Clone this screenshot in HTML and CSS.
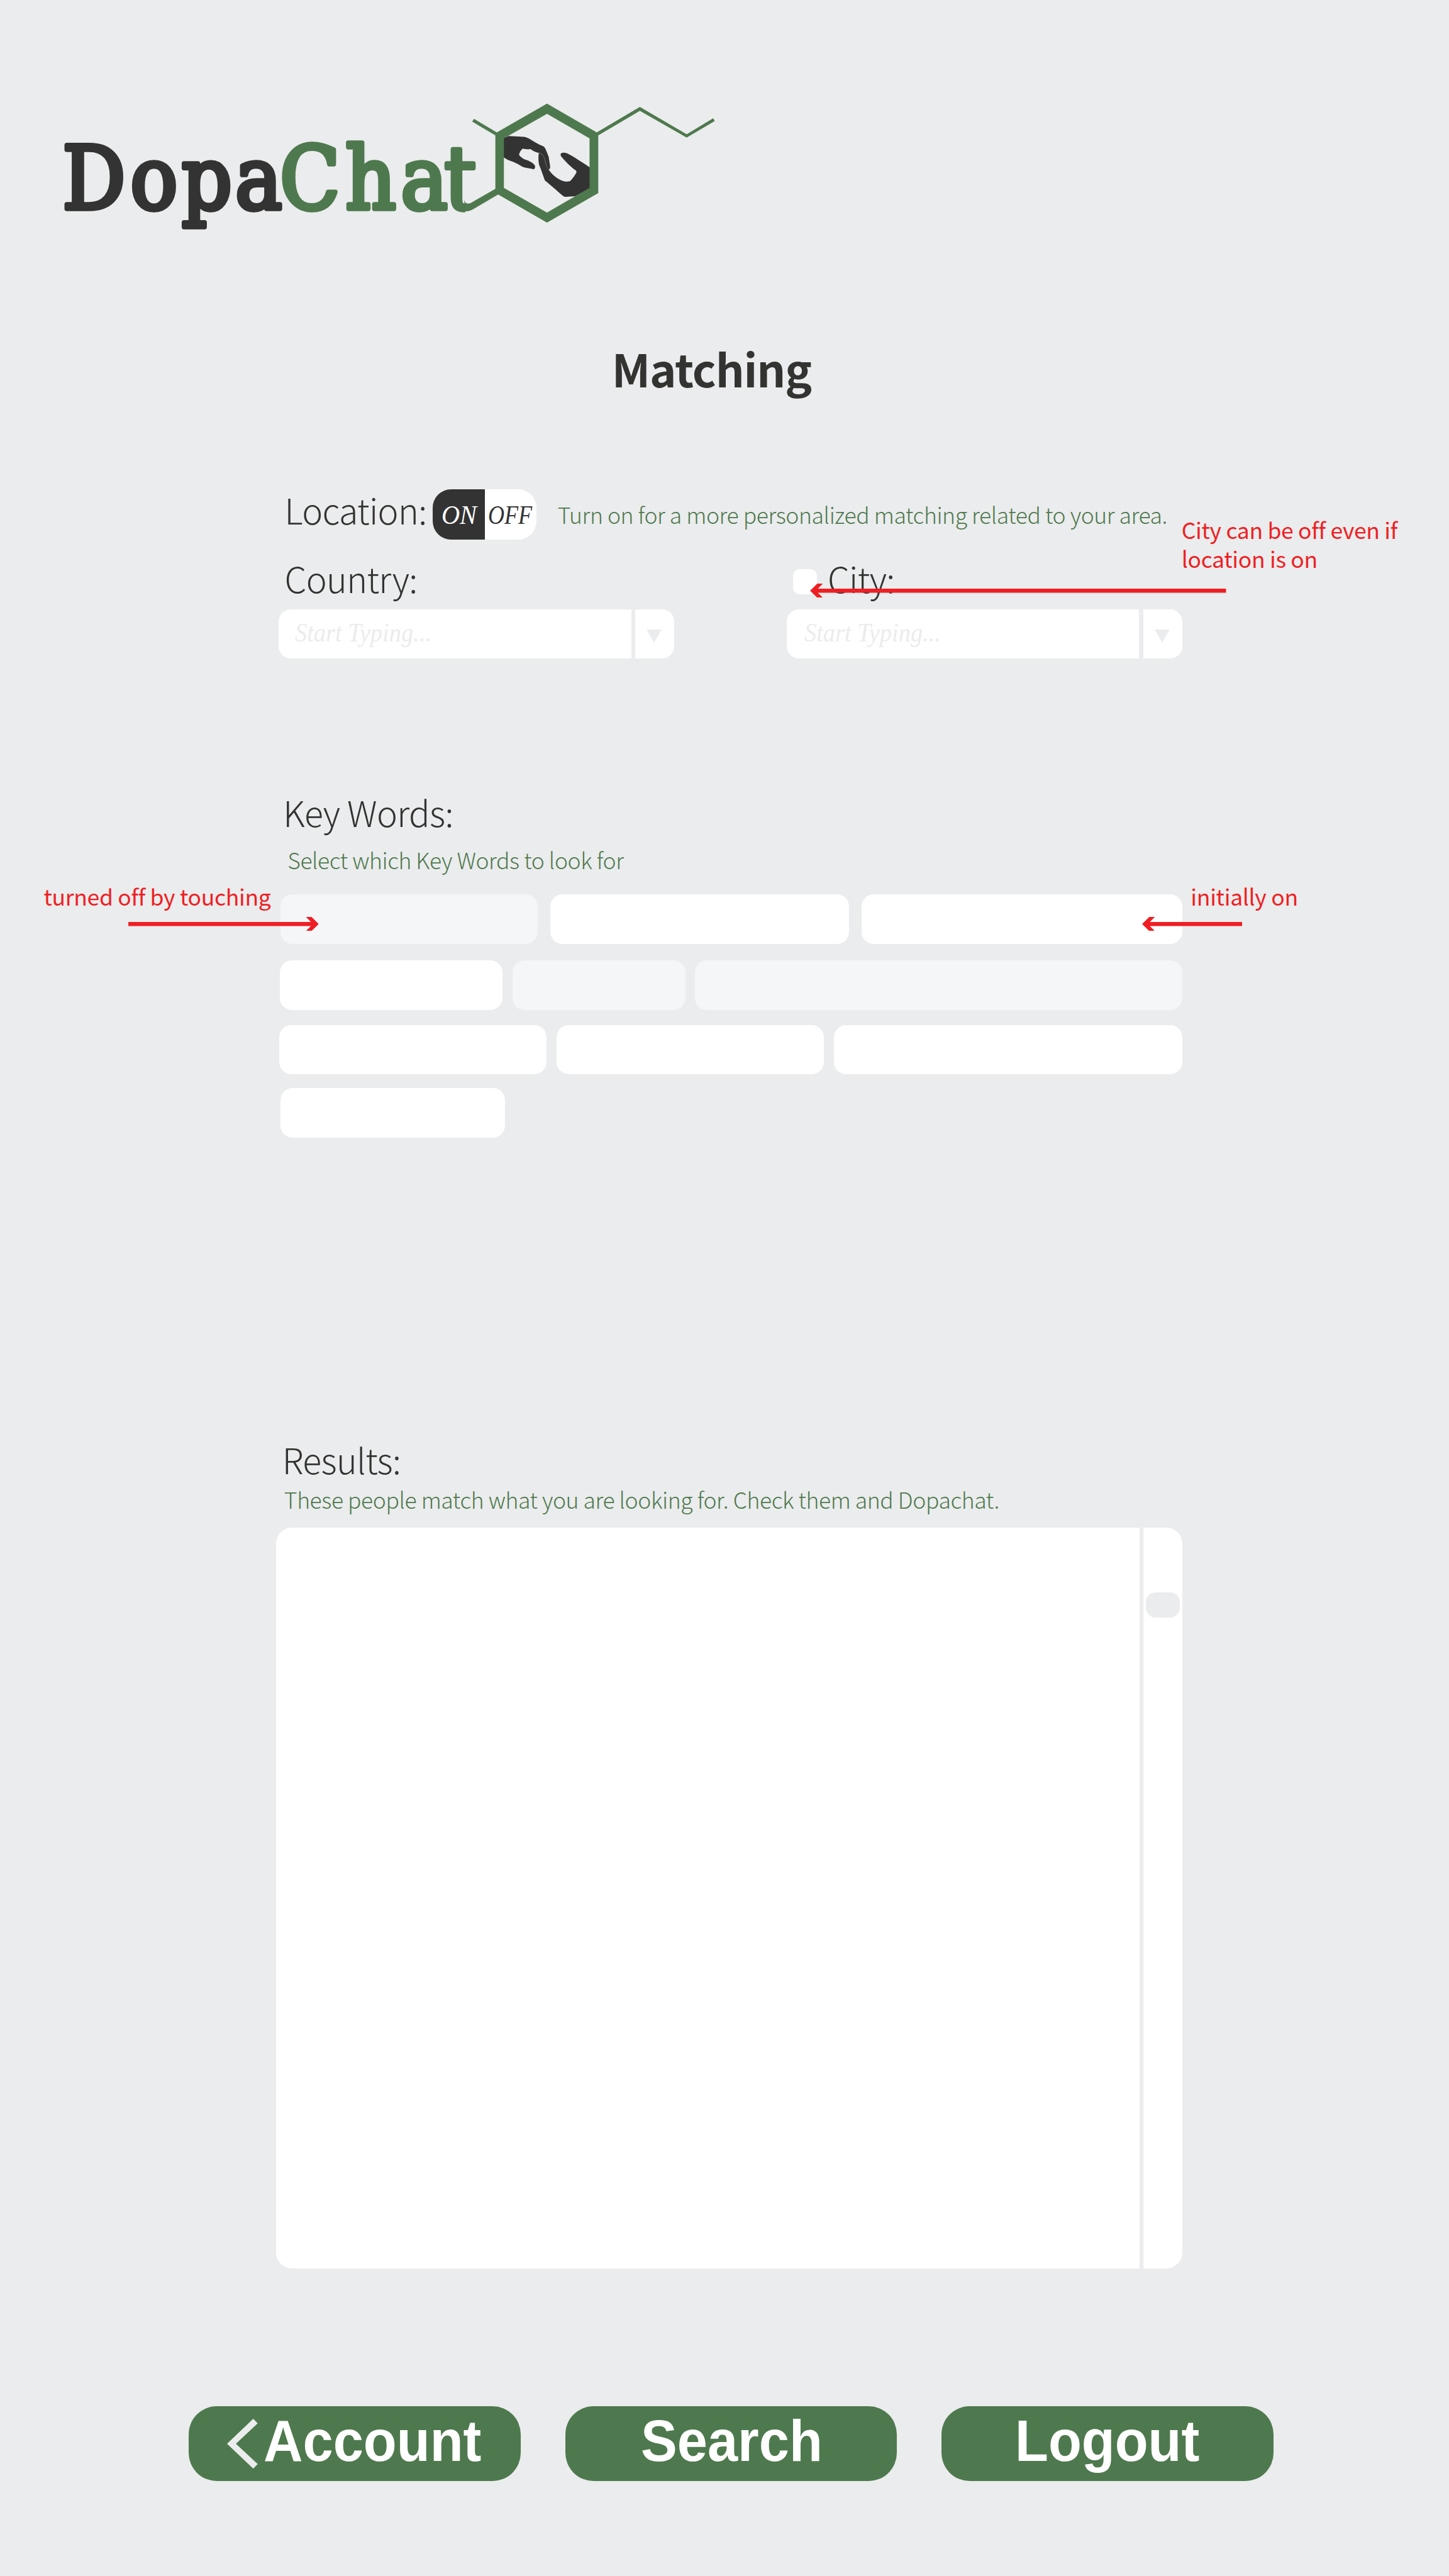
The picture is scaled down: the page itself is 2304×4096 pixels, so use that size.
FILE: index.html
```html
<!DOCTYPE html>
<html lang="en">
<head>
<meta charset="utf-8">
<title>DopaChat – Matching</title>
<link rel="stylesheet" href="styles.css">
</head>
<body>
<header class="header">
  <svg class="logo" viewBox="130 200 1350 290" role="img" aria-label="DopaChat">
    <clipPath id="t-hook"><path d="M560 270H1000V370H959V450H560Z"/></clipPath>
    <text class="word word-dark" x="129 269 375 485" y="430">Dopa</text>
    <text class="word word-green" x="577 712 826 916" y="430" clip-path="url(#t-hook)">Chat</text>
    <g transform="translate(900 180) scale(.38266 .33333)">
      <path class="hand" d="M355 317L388 302L465 307C495 308 510 332 555 356C575 365 580 367 586 382L603 430L611 490C611 505 606 510 602 508C590 495 590 470 580 440C573 418 565 410 550 407C530 402 515 392 505 383C490 386 475 383 463 380C452 393 447 402 443 418C450 430 460 438 472 446C495 453 515 465 526 480C532 488 532 500 523 508C505 502 485 500 465 493C450 485 440 475 415 463C395 455 385 452 355 430Z"/>
      <path class="hand" d="M550 407C565 410 574 420 580 440C588 470 590 490 602 508C620 540 650 568 680 580C695 586 705 585 718 581C728 568 740 555 753 525C752 515 748 514 740 508C715 485 690 455 675 435C660 415 668 405 683 405C705 404 730 425 830 500L830 623L746 674C720 676 700 679 688 677C680 675 670 660 583 577C575 555 560 500 553 485C547 465 547 430 550 407Z"/>
      <path class="seam" d="M550 407C565 410 574 420 580 440C588 470 590 490 602 508"/>
      <path class="bond" fill-rule="evenodd" d="M594 102L862 280L1094 122L1346 291L1489 192L1497 210L1346 312L1094 146L870 298V655L594 837L331 663L205 749Q180 768 153 768L148 690Q150 730 184 716L316 628V298L191 213L201 196L324 280ZM594 165L362 317V623L594 775L823 623V317Z"/>
    </g>
  </svg>
</header>

<main class="page">
  <h1 class="title">Matching</h1>

  <section class="location">
    <h2 class="label">Location:</h2>
    <div class="toggle"><div class="on"><span>ON</span></div><div class="off"><span>OFF</span></div></div>
    <p class="hint hint-location">Turn on for a more personalized matching related to your area.</p>
  </section>

  <section class="fields">
    <div class="field">
      <h2 class="label label-country">Country:</h2>
      <div class="select"><div class="input"><span class="placeholder">Start Typing...</span></div><span class="drop"><svg viewBox="0 0 31 27"><path d="M0 0H31L15.500 27Z"/></svg></span></div>
    </div>
    <div class="field">
      <div class="city"><span class="check"></span><h2 class="label label-city">City:</h2></div>
      <div class="select"><div class="input input-city"><span class="placeholder">Start Typing...</span></div><span class="drop"><svg viewBox="0 0 31 27"><path d="M0 0H31L15.500 27Z"/></svg></span></div>
    </div>
  </section>

  <section class="keywords">
    <h2 class="label label-keywords">Key Words:</h2>
    <p class="hint hint-keywords">Select which Key Words to look for</p>
    <div class="chips row1"><span class="chip muted"></span><span class="chip"></span><span class="chip"></span></div>
    <div class="chips row2"><span class="chip"></span><span class="chip muted"></span><span class="chip muted"></span></div>
    <div class="chips row3"><span class="chip"></span><span class="chip"></span><span class="chip"></span></div>
    <div class="chips row4"><span class="chip"></span></div>
  </section>

  <section class="results">
    <h2 class="label label-results">Results:</h2>
    <p class="hint hint-results">These people match what you are looking for. Check them and Dopachat.</p>
    <div class="list"><div class="items"></div><div class="track"><div class="thumb"></div></div></div>
  </section>
</main>

<nav class="actions">
  <a class="btn btn-account"><svg class="back" viewBox="0 0 64 103"><path d="M54 0L63.200 9.300L18.300 51.400L63.200 93.200L54 102.800L0 51.400Z"/></svg><span>Account</span></a>
  <a class="btn btn-search"><span>Search</span></a>
  <a class="btn btn-logout"><span>Logout</span></a>
</nav>

<p class="note note-city">City can be off even if<br>location is on</p>
<p class="note note-off">turned off by touching</p>
<p class="note note-on">initially on</p>
<svg class="arrow arrow-city" viewBox="0 0 857.200 29"><path d="M0 14.500L14.700 0H26.300L16 10.300H857.200V18.700H16L26.300 29H14.700Z"/></svg>
<svg class="arrow arrow-off" viewBox="0 0 392.300 29"><path d="M392.300 14.500L377.600 0H366L376.300 10.300H0V18.700H376.300L366 29H377.600Z"/></svg>
<svg class="arrow arrow-on" viewBox="0 0 206.300 29"><path d="M0 14.500L14.700 0H26.300L16 10.300H206.300V18.700H16L26.300 29H14.700Z"/></svg>
</body>
</html>
```
FILE: styles.css
```css
* { box-sizing: border-box; margin: 0; padding: 0; }

/* 1rem is 100 design units; the board is 29.85 x 53.06 rem */
html { font-size: 77.186px; }
body {
  position: relative;
  width: 29.85rem;
  height: 53.06rem;
  overflow: hidden;
  background: #ebeced;
  color: #333331;
  font-family: "Noto Sans CJK JP", "Noto Sans CJK SC", sans-serif;
}
svg { display: block; }

.header { height: 5rem; padding: 2rem 0 0 1.3rem; }
.logo { width: 13.5rem; height: 2.9rem; }
.word {
  font-family: "DejaVu Serif Condensed", "DejaVu Serif", serif;
  font-stretch: condensed;
  font-size: 180px;
  stroke-width: 9.5px;
  stroke-linejoin: round;
}
.word-dark { fill: #333; stroke: #333; }
.word-green { fill: #4e794e; stroke: #4e794e; }
.hand { fill: #333; }
.seam { fill: none; stroke: #888; stroke-width: 1.2; }
.bond { fill: #4e794e; }

.page { width: 24.354rem; padding-left: 5.694rem; }
.title {
  height: .932rem;
  margin: 2.125rem 0 0 6.91rem;
  font-size: .932rem;
  line-height: 1;
  font-weight: 600;
  letter-spacing: -.0145rem;
  white-space: nowrap;
}
.label { height: .72rem; font-size: .72rem; line-height: 1; font-weight: 300; letter-spacing: -.0085rem; white-space: nowrap; }
.hint { height: .46rem; font-size: .46rem; line-height: 1; font-weight: 300; letter-spacing: -.0054rem; color: #4e794e; white-space: nowrap; }

.location { display: flex; height: 1.03rem; margin-top: 2.023rem; padding-left: .17rem; }
.location .label { width: 3.054rem; margin-top: .06rem; }
.toggle {
  display: flex;
  width: 2.14rem;
  height: 1.03rem;
  border-radius: .38rem;
  overflow: hidden;
  background: #fff;
  font: italic .55rem/1 "Liberation Serif", serif;
}
.toggle span { display: block; transform-origin: 0 0; }
.on { width: 1.072rem; padding: .26rem 0 0 .18rem; background: #333; color: #fff; }
.on span { transform: scaleX(.95); }
.off { width: 1.068rem; padding: .26rem 0 0 .07rem; color: #333; }
.off span { transform: scaleX(.85); }
.hint-location { margin: .289rem 0 0 .43rem; }

.fields { display: flex; justify-content: space-between; margin-top: .452rem; padding-left: .05rem; }
.field { width: 8.145rem; }
.label-country { padding-left: .12rem; }
.city { display: flex; }
.check { width: .494rem; height: .52rem; margin: .158rem .22rem 0 .126rem; border-radius: .14rem; background: #fff; }
.select { display: flex; height: 1.017rem; margin-top: .271rem; gap: .087rem; }
.input { flex: 1; padding: .207rem 0 0 .33rem; border-radius: .25rem 0 0 .25rem; background: #fff; }
.input-city { padding-left: .36rem; }
.placeholder {
  display: block;
  transform: scaleX(.905);
  transform-origin: 0 0;
  color: #ebeced;
  font: italic .55rem/1 "Liberation Serif", serif;
}
.drop { width: .8rem; padding: .417rem 0 0 .235rem; border-radius: 0 .25rem .25rem 0; background: #fff; }
.drop svg { width: .31rem; height: .273rem; fill: #ebeced; }

.keywords { margin-top: 2.806rem; }
.label-keywords { padding-left: .14rem; }
.hint-keywords { margin: .381rem 0 .488rem .23rem; }
.chips { display: grid; height: 1.02rem; }
.chip { border-radius: .25rem; background: #fff; }
.muted { background: #f5f6f8; }
.row1 { grid-template-columns: 5.296rem 6.155rem 6.609rem; column-gap: .257rem; padding-left: .09rem; }
.row2 { grid-template-columns: 4.595rem 3.565rem 10.039rem; column-gap: .196rem; margin-top: .34rem; padding-left: .069rem; }
.row3 { grid-template-columns: 5.51rem 5.514rem 7.177rem; column-gap: .2rem; margin-top: .31rem; padding-left: .059rem; }
.row4 { grid-template-columns: 4.62rem; margin-top: .28rem; padding-left: .09rem; }

.results { margin-top: 6.28rem; }
.label-results { padding-left: .12rem; }
.hint-results { margin: .223rem 0 .358rem .16rem; }
.list { display: flex; gap: .085rem; height: 15.262rem; }
.items { flex: 1; border-radius: .33rem 0 0 .33rem; background: #fff; }
.track { width: .799rem; padding: 1.33rem .048rem 0; border-radius: 0 .33rem .33rem 0; background: #fff; }
.thumb { height: .513rem; border-radius: .2rem; background: #ebeced; }

.actions { display: flex; gap: .92rem; margin-top: 2.831rem; padding-left: 3.888rem; }
.btn {
  display: flex;
  width: 6.835rem;
  height: 1.547rem;
  border-radius: .58rem;
  background: #4e794e;
  color: #fff;
  font: bold 1.2rem/1 "Liberation Sans", Arial, sans-serif;
}
.btn span { margin-top: .115rem; transform: scaleX(.935); transform-origin: 0 0; white-space: nowrap; }
.back { flex: none; width: .64rem; height: 1.03rem; margin: .262rem .12rem 0 .785rem; fill: #ebeced; }
.btn-search { padding-left: 1.56rem; }
.btn-logout { padding-left: 1.51rem; }

.note { position: absolute; font-size: .46rem; line-height: .6rem; letter-spacing: -.004rem; color: #ee1f24; white-space: nowrap; }
.note-city { left: 24.34rem; top: 10.611rem; }
.note-off { left: .9rem; top: 18.169rem; }
.note-on { left: 24.53rem; top: 18.169rem; }
.arrow { position: absolute; height: .29rem; fill: #ee1f24; }
.arrow-city { left: 16.687rem; top: 12.02rem; width: 8.572rem; }
.arrow-off { left: 2.64rem; top: 18.883rem; width: 3.923rem; }
.arrow-on { left: 23.522rem; top: 18.883rem; width: 2.063rem; }
```
